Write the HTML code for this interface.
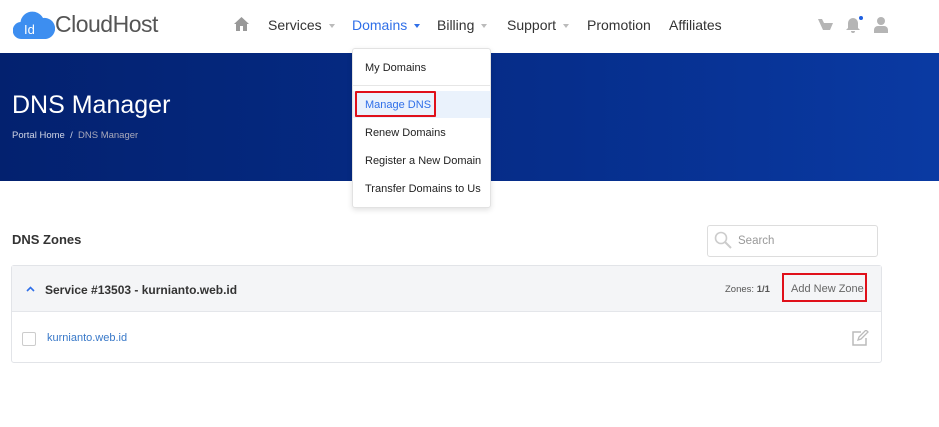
<!DOCTYPE html>
<html><head><style>
*{margin:0;padding:0;box-sizing:border-box}
body{width:939px;height:427px;background:#fff;font-family:"Liberation Sans",sans-serif;position:relative;overflow:hidden;color:#333}
.a{position:absolute;white-space:nowrap}
.nav{font-size:14px;color:#333;top:17px}
.car{display:inline-block;width:0;height:0;border-left:3px solid transparent;border-right:3px solid transparent;border-top:4px solid #bbb;margin-left:7px;vertical-align:middle}
.banner{left:0;top:53px;width:939px;height:128px;background:linear-gradient(90deg,#03216f,#062e8c 60%,#0a3aa3)}
.dd{left:352px;top:48px;width:139px;height:160px;background:#fff;border:1px solid #e2e2e2;border-radius:3px;box-shadow:0 2px 6px rgba(0,0,0,.12)}
.dd div{position:absolute;left:12px;font-size:11px;color:#222}
</style></head><body>
<svg class="a" style="left:13px;top:10px" width="42" height="30" viewBox="0 0 42 30"><path d="M9 29a8.5 8.5 0 0 1-1.5-17A12 12 0 0 1 30 8a10 10 0 0 1 3 21z" fill="#3d8ef0"/><text x="11" y="24" font-family="Liberation Sans" font-size="13" fill="#fff">Id</text></svg>
<div class="a" style="left:55px;top:11px;font-size:23px;color:#555;letter-spacing:-0.5px">CloudHost</div>
<svg class="a" style="left:234px;top:17px" width="15" height="14" viewBox="0 0 15 14"><path d="M7.5 0L0 7h2v7h4V9h3v5h4V7h2z" fill="#999"/></svg>
<div class="a nav" style="left:268px">Services<span class="car"></span></div>
<div class="a nav" style="left:352px;color:#2f6fe8">Domains<span class="car" style="border-top-color:#2f6fe8"></span></div>
<div class="a nav" style="left:437px">Billing<span class="car"></span></div>
<div class="a nav" style="left:507px">Support<span class="car"></span></div>
<div class="a nav" style="left:587px">Promotion</div>
<div class="a nav" style="left:669px">Affiliates</div>
<svg class="a" style="left:818px;top:18px" width="16" height="13" viewBox="0 0 16 13"><path d="M0 1l4 0 2 4h9l-3 7H5z" fill="#b5b5b5"/></svg>
<svg class="a" style="left:846px;top:16px" width="18" height="17" viewBox="0 0 18 17"><path d="M7 2a5 5 0 0 0-5 5v5l-2 2h14l-2-2V7a5 5 0 0 0-5-5zM5 15h4a2 2 0 0 1-4 0z" fill="#b5b5b5"/><circle cx="15" cy="2" r="2" fill="#1e5fe0"/></svg>
<svg class="a" style="left:874px;top:17px" width="14" height="16" viewBox="0 0 14 16"><circle cx="7" cy="4" r="4" fill="#b5b5b5"/><path d="M0 16v-3a4 4 0 0 1 4-4h6a4 4 0 0 1 4 4v3z" fill="#b5b5b5"/></svg>
<div class="a banner"></div>
<div class="a" style="left:12px;top:91px;font-size:25px;color:#fff">DNS Manager</div>
<div class="a" style="left:12px;top:130px;font-size:9.5px;color:#d0d5e5">Portal Home &nbsp;/&nbsp; <span style="color:#aab">DNS Manager</span></div>
<div class="a dd">
<div style="top:13px">My Domains</div>
<div style="left:0;top:36px;width:137px;height:1px;background:#e6e6e6"></div>
<div style="left:0;top:42px;width:137px;height:27px;background:#eaf2fc"></div>
<div style="left:2px;top:42px;width:81px;height:26px;border:2px solid #e0101a;border-radius:1px"></div>
<div style="top:50px;color:#2f6fe8">Manage DNS</div>
<div style="top:78px">Renew Domains</div>
<div style="top:106px">Register a New Domain</div>
<div style="top:134px">Transfer Domains to Us</div>
</div>
<div class="a" style="left:12px;top:232px;font-size:13px;font-weight:bold;color:#333">DNS Zones</div>
<div class="a" style="left:707px;top:225px;width:171px;height:32px;border:1px solid #ddd;border-radius:3px"></div>
<svg class="a" style="left:714px;top:231px" width="18" height="18" viewBox="0 0 18 18"><circle cx="7" cy="7" r="5.5" fill="none" stroke="#ccc" stroke-width="1.6"/><path d="M11 11l6 6" stroke="#ccc" stroke-width="2"/></svg>
<div class="a" style="left:738px;top:235px;font-size:11.5px;color:#999">Search</div>
<div class="a" style="left:11px;top:265px;width:871px;height:98px;border:1px solid #e2e4e8;border-radius:3px"></div>
<div class="a" style="left:12px;top:266px;width:869px;height:46px;background:#f4f5f7;border-bottom:1px solid #e4e6ea"></div>
<svg class="a" style="left:26px;top:286px" width="9" height="6" viewBox="0 0 9 6"><path d="M1 5l3.5-3.5L8 5" fill="none" stroke="#2f6fe8" stroke-width="1.6"/></svg>
<div class="a" style="left:45px;top:283px;font-size:12px;font-weight:bold;color:#333">Service #13503 - kurnianto.web.id</div>
<div class="a" style="left:725px;top:284px;font-size:9.5px;color:#555">Zones: <b>1/1</b></div>
<div class="a" style="left:782px;top:273px;width:85px;height:29px;border:2px solid #e0101a"></div>
<div class="a" style="left:791px;top:283px;font-size:11px;color:#666">Add New Zone</div>
<div class="a" style="left:22px;top:332px;width:14px;height:14px;border:1px solid #ccc;border-radius:2px"></div>
<div class="a" style="left:47px;top:332px;font-size:11px;color:#3878c8">kurnianto.web.id</div>
<svg class="a" style="left:852px;top:330px" width="17" height="16" viewBox="0 0 17 16"><path d="M9 2H1v13h13V8" fill="none" stroke="#bbb" stroke-width="1.5"/><path d="M6 10l1-3 7-7 2 2-7 7z" fill="none" stroke="#bbb" stroke-width="1.3"/></svg>
</body></html>
